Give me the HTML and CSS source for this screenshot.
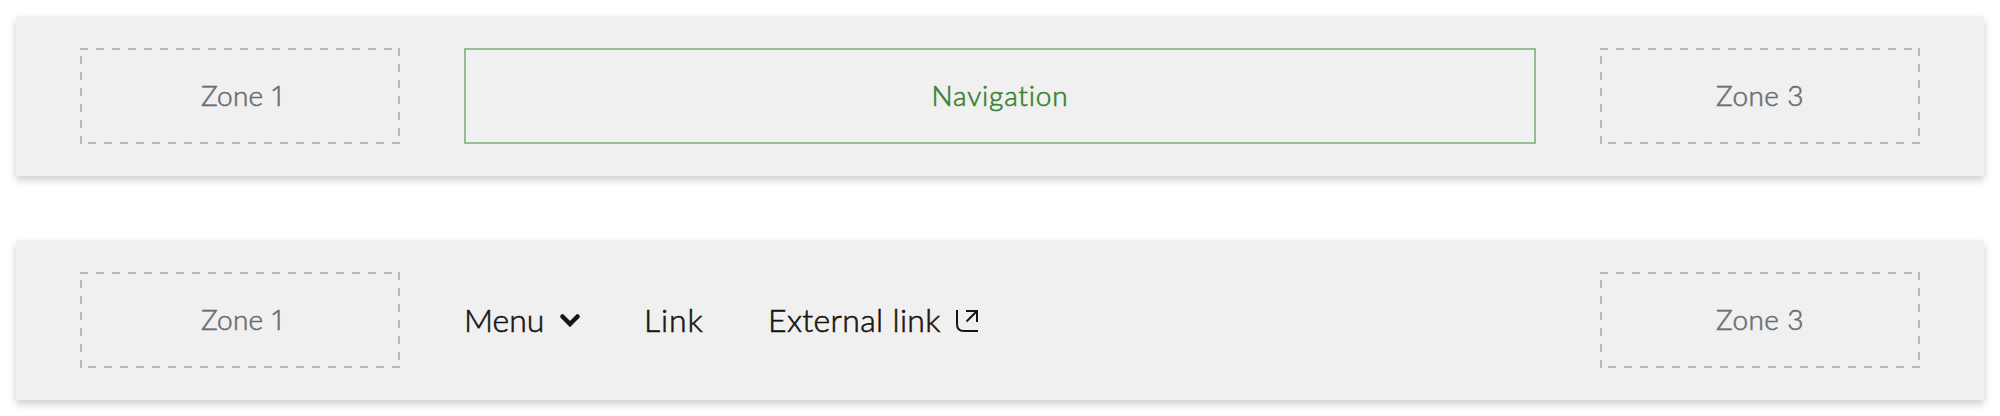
FILE: index.html
```
<!DOCTYPE html>
<html lang="en"><head><meta charset="utf-8"><title>Navigation</title><link rel="stylesheet" href="styles.css"></head>
<body>
<header class="bar">
<div class="zone"><svg class="outline"><path d="M0 1h320M319 0v96M320 95H0M1 96V0"/></svg><span class="z1">Zone <span class="one">1</span></span></div>
<div class="navigation"><span class="nav-label">Navigation</span></div>
<div class="zone"><svg class="outline"><path d="M0 1h320M319 0v96M320 95H0M1 96V0"/></svg><span class="z3">Zone 3</span></div>
</header>
<header class="bar">
<div class="zone"><svg class="outline"><path d="M0 1h320M319 0v96M320 95H0M1 96V0"/></svg><span class="z1">Zone <span class="one">1</span></span></div>
<nav class="links">
<a class="item"><span class="menu">Menu</span><svg class="chevron" viewBox="0 0 20 13"><path d="M2.5 2.5L10 10l7.5-7.5"/></svg></a>
<a class="item"><span class="link">Link</span></a>
<a class="item"><span class="external">External link</span><svg class="arrow" viewBox="0 0 22 22"><path d="M1 0v14q0 7 7 7h14M10 1h11v11M10.5 11.5L21 1"/></svg></a>
</nav>
<div class="zone"><svg class="outline"><path d="M0 1h320M319 0v96M320 95H0M1 96V0"/></svg><span class="z3">Zone 3</span></div>
</header>
</body></html>
```
FILE: styles.css
```
*{box-sizing:border-box}
body{margin:0;padding:16px;display:flex;flex-direction:column;gap:64px;background:#fff;font-family:Lato,sans-serif;font-weight:300;font-variant-ligatures:none}
.bar{height:160px;padding:32px 64px;display:flex;gap:64px;background:#f0f0f0;box-shadow:0 4px 8px #0003}
.zone{width:320px;display:grid;place-items:center;color:#6a6e73;font-size:28px;white-space:nowrap}
.zone>*{grid-area:1/1}
.outline{width:320px;height:96px;fill:none;stroke:#b8bbbe;stroke-width:2;stroke-dasharray:8 8}
.zone span,.navigation span,.item span{-webkit-text-stroke:.6px currentColor}
.z1,.z3{line-height:34px;padding-bottom:2px;letter-spacing:.4px}
.one{font-family:"Open Sans",sans-serif;line-height:1;letter-spacing:0}
.z1{letter-spacing:.2px}
.z1 .one{margin-left:-1px;margin-right:-7px}
.nav-label{padding-bottom:2px;letter-spacing:.8px}
.navigation{flex:1;border:2px solid #95bd93;display:grid;place-items:center;color:#38812f;font-size:28px}
.links{flex:1;display:flex;align-items:center;gap:64px;font-size:32px;color:#151515}
.item{display:flex;align-items:center;gap:16px;white-space:nowrap}
.item span{padding-bottom:2px}
.menu{width:80px}
.link{width:60px;letter-spacing:.9px}
.external{width:172px;letter-spacing:.35px}
.chevron{width:20px;height:13px;fill:none;stroke:#151515;stroke-width:4.5;stroke-linecap:round}
.arrow{width:22px;height:22px;margin-top:2px;fill:none;stroke:#151515;stroke-width:2}
```
